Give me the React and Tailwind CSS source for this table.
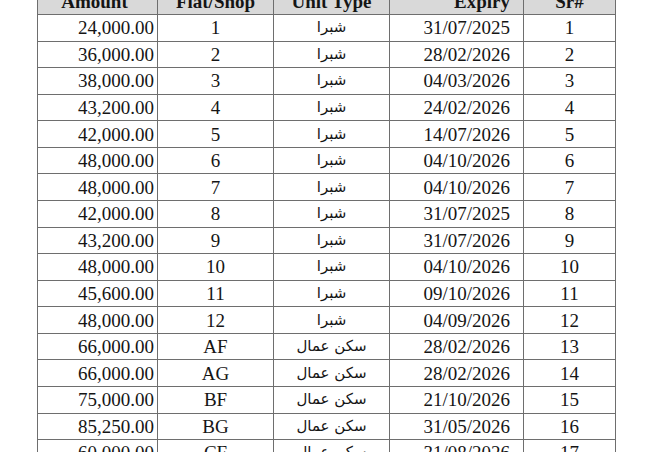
import React from "react";

const rows = [
  ["24,000.00", "1", "شبرا", "31/07/2025", "1"],
  ["36,000.00", "2", "شبرا", "28/02/2026", "2"],
  ["38,000.00", "3", "شبرا", "04/03/2026", "3"],
  ["43,200.00", "4", "شبرا", "24/02/2026", "4"],
  ["42,000.00", "5", "شبرا", "14/07/2026", "5"],
  ["48,000.00", "6", "شبرا", "04/10/2026", "6"],
  ["48,000.00", "7", "شبرا", "04/10/2026", "7"],
  ["42,000.00", "8", "شبرا", "31/07/2025", "8"],
  ["43,200.00", "9", "شبرا", "31/07/2026", "9"],
  ["48,000.00", "10", "شبرا", "04/10/2026", "10"],
  ["45,600.00", "11", "شبرا", "09/10/2026", "11"],
  ["48,000.00", "12", "شبرا", "04/09/2026", "12"],
  ["66,000.00", "AF", "سكن عمال", "28/02/2026", "13"],
  ["66,000.00", "AG", "سكن عمال", "28/02/2026", "14"],
  ["75,000.00", "BF", "سكن عمال", "21/10/2026", "15"],
  ["85,250.00", "BG", "سكن عمال", "31/05/2026", "16"],
  ["60,000.00", "CF", "سكن عمال", "31/08/2026", "17"],
];

const grid = "grid grid-cols-[120px_116px_116px_134px_92px] h-[26.5625px]";
const cell = "border-r border-b border-[#6e6e6e] flex items-center overflow-hidden";

export default function App() {
  return (
    <div className="w-[668px] h-[452px] overflow-hidden bg-white">
      <div className="ml-[37px] mt-[-11.5px] w-[579px] border-l border-[#6e6e6e] text-[19px] text-[#151515] font-['Liberation_Serif',serif] leading-none">
        <div className={`${grid} bg-[#d9d9d9] font-bold`}>
          <div className={`${cell} justify-center pr-[6px]`}>Amount</div>
          <div className={`${cell} justify-center`}>Flat/Shop</div>
          <div className={`${cell} justify-center`}>Unit Type</div>
          <div className={`${cell} justify-end pr-[13px]`}>Expiry</div>
          <div className={`${cell} justify-center`}>Sr#</div>
        </div>
        {rows.map((r, i) => (
          <div key={i} className={grid}>
            <div className={`${cell} justify-end pr-[3px]`}>{r[0]}</div>
            <div className={`${cell} justify-center`}>{r[1]}</div>
            <div className={`${cell} justify-center font-['DejaVu_Sans',sans-serif] text-[15px]`} dir="rtl">{r[2]}</div>
            <div className={`${cell} justify-end pr-[13px]`}>{r[3]}</div>
            <div className={`${cell} justify-center`}>{r[4]}</div>
          </div>
        ))}
      </div>
    </div>
  );
}
